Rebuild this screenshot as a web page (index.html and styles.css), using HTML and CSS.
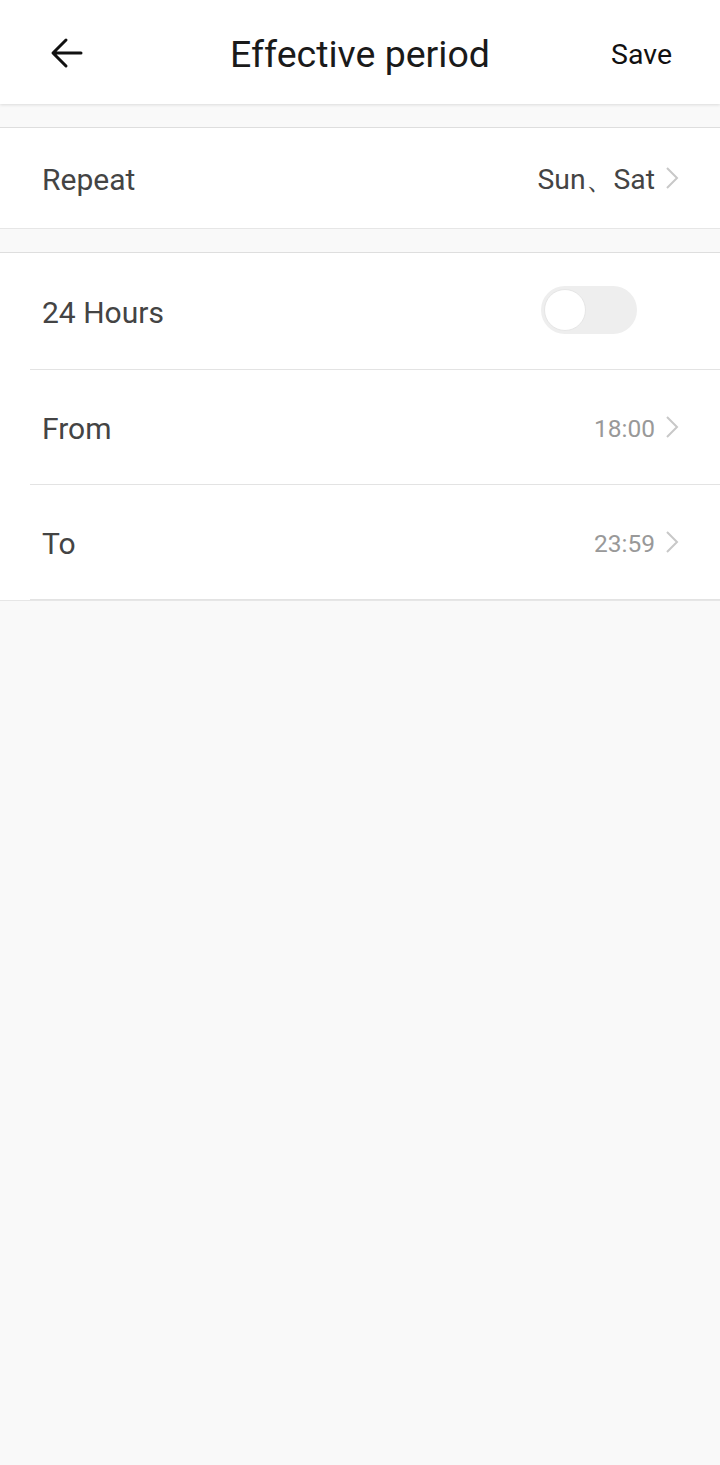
FILE: index.html
```html
<!DOCTYPE html>
<html lang="en">
<head>
    <meta charset="UTF-8">
    <meta name="viewport" content="width=device-width, initial-scale=1.0">
    <title>Effective period</title>
    <link rel="stylesheet" href="styles.css">
</head>
<body>
    <div class="header">
        <button class="back" aria-label="Back">
            <svg width="34" height="34" viewBox="0 0 34 34">
                <path d="M31 17H4M16 4L3 17l13 13" fill="none" stroke="#111" stroke-width="3" stroke-linecap="round" stroke-linejoin="round"/>
            </svg>
        </button>
        <h1>Effective period</h1>
        <button class="save">Save</button>
    </div>

    <div class="gap"></div>
    <div class="group">
        <div class="row repeat">
            <span class="label">Repeat</span>
            <span class="value dark">Sun、Sat</span>
            <svg class="chevron" width="14" height="24" viewBox="0 0 14 24"><path d="M2 2l10 10L2 22" fill="none" stroke="#c8c8c8" stroke-width="2"/></svg>
        </div>
    </div>

    <div class="gap"></div>
    <div class="group">
        <div class="row tall">
            <span class="label">24 Hours</span>
            <div class="switch"><div class="knob"></div></div>
        </div>
        <div class="row">
            <span class="label">From</span>
            <span class="value">18:00</span>
            <svg class="chevron" width="14" height="24" viewBox="0 0 14 24"><path d="M2 2l10 10L2 22" fill="none" stroke="#c8c8c8" stroke-width="2"/></svg>
        </div>
        <div class="row">
            <span class="label">To</span>
            <span class="value">23:59</span>
            <svg class="chevron" width="14" height="24" viewBox="0 0 14 24"><path d="M2 2l10 10L2 22" fill="none" stroke="#c8c8c8" stroke-width="2"/></svg>
        </div>
    </div>
</body>
</html>
```

FILE: styles.css
```css
body {
    margin: 0;
    font-family: Roboto, "Noto Sans", sans-serif;
    background-color: #f9f9f9;
    min-height: 100vh;
}
.header {
    position: relative;
    height: 104px;
    background-color: #fff;
    display: flex;
    align-items: center;
    justify-content: space-between;
    padding: 0 48px 0 50px;
    box-shadow: 0 1px 3px rgba(0,0,0,0.12);
}
.header h1 {
    position: absolute;
    left: 0;
    right: 0;
    margin: 0;
    padding-top: 4px;
    text-align: center;
    font-size: 37.5px;
    font-weight: 400;
    color: #1a1a1a;
    pointer-events: none;
}
.header button {
    background: none;
    border: none;
    padding: 0;
    cursor: pointer;
}
.back {
    display: flex;
    margin-top: 2px;
}
.save {
    font-family: inherit;
    font-size: 28.5px;
    color: #111;
    padding-top: 4px !important;
}
.gap {
    height: 23px;
    border-bottom: 1px solid #dedede;
}
.group {
    background-color: #fff;
    border-bottom: 1px solid #e6e6e6;
}
.row {
    display: flex;
    align-items: center;
    height: 114px;
    margin-left: 30px;
    padding: 0 41px 0 12px;
    border-bottom: 1px solid #e3e3e3;
}
.row.repeat {
    height: 100px;
    border-bottom: none;
}
.row.tall {
    height: 116px;
}
.label {
    flex: 1;
    font-size: 30px;
    color: #444;
    padding-top: 3px;
}
.value {
    font-size: 24.5px;
    color: #999;
    margin-right: 10px;
    padding-top: 3px;
}
.value.dark {
    font-size: 28.3px;
    color: #444;
}
.chevron {
    display: block;
}
.switch {
    width: 96px;
    height: 48px;
    border-radius: 24px;
    background-color: #eeeeee;
    margin-right: 42px;
    margin-top: -2px;
    display: flex;
    align-items: center;
    padding: 0 3px;
    box-sizing: border-box;
}
.knob {
    width: 40px;
    height: 40px;
    border-radius: 50%;
    background-color: #fff;
    border: 1px solid #e6e6e6;
}
```
